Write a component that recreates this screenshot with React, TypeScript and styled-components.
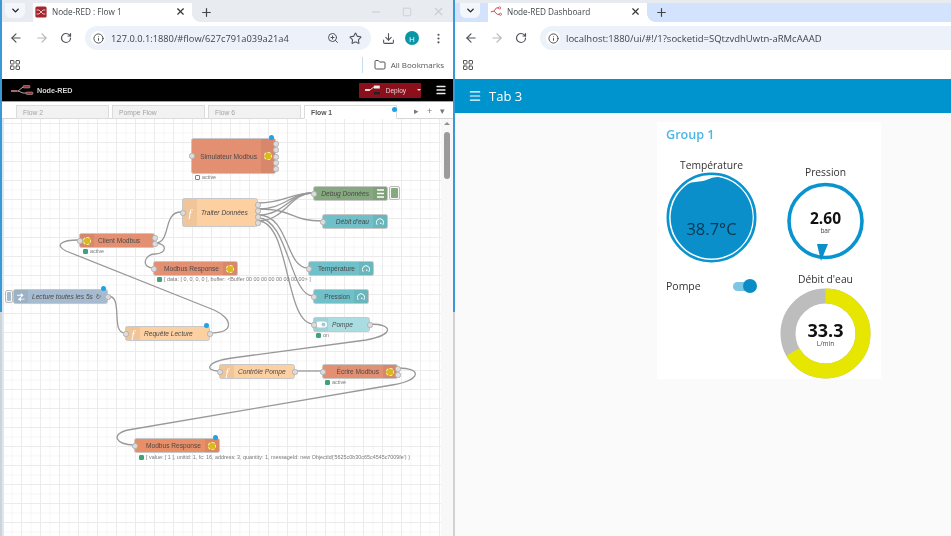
import React from "react";
import styled, { createGlobalStyle } from "styled-components";
import {
  ArrowLeft,
  ArrowRight,
  ChevronDown,
  Download,
  EllipsisVertical,
  Folder,
  Info,
  LayoutGrid,
  Menu,
  Minus,
  Plus,
  RotateCw,
  Square,
  Star,
  X,
  ZoomIn,
} from "lucide-react";

const GlobalStyle = createGlobalStyle`
  html, body { margin: 0; padding: 0; background: #fff; overflow: hidden; }
  * { box-sizing: border-box; }
`;

const Screen = styled.div`
  display: flex;
  width: 951px;
  height: 536px;
  overflow: hidden;
  font-family: "Open Sans", "Noto Sans", sans-serif;
  color: #3c4043;
  background: #fff;
  filter: blur(0.4px);
`;

const Window = styled.section<{ $width: number }>`
  width: ${(p) => p.$width}px;
  flex: none;
  height: 100%;
  display: flex;
  flex-direction: column;
`;

const LeftWindow = styled(Window)`
  border-style: solid;
  border-width: 0 2px 0 2px;
  border-image: linear-gradient(#3b98d6 312px, #d2d2d2 312px) 1;
  border-right: 2px solid #a9a9a9;
`;

const TabStrip = styled.div<{ $bg: string; $pad: number }>`
  height: 22px;
  flex: none;
  border-top: 3px solid #e8ebf0;
  background: ${(p) => p.$bg};
  display: flex;
  align-items: stretch;
  padding-left: ${(p) => p.$pad}px;
`;

const ChevronButton = styled.div`
  width: 20px;
  height: 15px;
  background: #f3f6fb;
  border-radius: 0 0 6px 6px;
  display: flex;
  align-items: center;
  justify-content: center;
  color: #222;
  margin-right: 8px;
`;

const BrowserTab = styled.div`
  position: relative;
  width: 159px;
  background: #fff;
  display: flex;
  align-items: center;
  padding: 0 6px 2px 2px;
  gap: 5px;
  font-size: 8.2px;
  color: #45494d;
  white-space: nowrap;
  &::after {
    content: "";
    position: absolute;
    right: -8px;
    bottom: 0;
    width: 8px;
    height: 8px;
    background: radial-gradient(circle at 100% 0, transparent 7.5px, #fff 8px);
  }
`;

const TabTitle = styled.span`
  flex: 1;
`;

const NewTab = styled.div`
  width: 28px;
  display: flex;
  align-items: center;
  justify-content: center;
  color: #444;
`;

const WindowControls = styled.div`
  margin-left: auto;
  display: flex;
  align-items: center;
  gap: 20px;
  padding: 0 8px 2px 0;
  color: #c9cdd3;
`;

const Toolbar = styled.div<{ $pad: number }>`
  height: 28px;
  flex: none;
  background: #fff;
  display: flex;
  align-items: center;
  padding: 4px 0 0 ${(p) => p.$pad}px;
  color: #555;
`;

const NavIcon = styled.span<{ $gap?: number; $muted?: boolean }>`
  display: flex;
  margin-right: ${(p) => p.$gap ?? 11.5}px;
  color: ${(p) => (p.$muted ? "#b4b7bb" : "#50545a")};
`;

const AddressBar = styled.div<{ $open?: boolean }>`
  flex: 1;
  height: 24px;
  background: #edf2fa;
  border-radius: ${(p) => (p.$open ? "12px 0 0 12px" : "12px")};
  display: flex;
  align-items: center;
  padding: 0 9px 0 6px;
  color: #3f4449;
  white-space: nowrap;
`;

const InfoBadge = styled.span`
  width: 14px;
  height: 14px;
  border-radius: 50%;
  background: #fff;
  display: flex;
  align-items: center;
  justify-content: center;
  margin-right: 6px;
  color: #444;
`;

const Url = styled.span<{ $size: number }>`
  flex: 1;
  font-size: ${(p) => p.$size}px;
`;

const ToolIcons = styled.div`
  display: flex;
  align-items: center;
  gap: 10px;
  color: #50545a;
`;

const Actions = styled.div`
  display: flex;
  align-items: center;
  width: 82px;
  padding-left: 11px;
  color: #50545a;
`;

const Avatar = styled.span`
  width: 14px;
  height: 14px;
  margin: 0 13px 0 10px;
  border-radius: 50%;
  background: #0b96a8;
  color: #fff;
  font-size: 8px;
  display: flex;
  align-items: center;
  justify-content: center;
`;

const BookmarksBar = styled.div`
  height: 29px;
  flex: none;
  background: #fff;
  display: flex;
  align-items: center;
  padding: 0 9px 0 7px;
  color: #555;
  font-size: 8px;
`;

const BookmarkGroup = styled.div`
  margin-left: auto;
  display: flex;
  align-items: center;
  gap: 5px;
  height: 16px;
  border-left: 1px solid #c6dcec;
  padding-left: 11px;
`;

const RedHeader = styled.header`
  height: 23px;
  flex: none;
  background: #000;
  border-bottom: 1px solid #b59a96;
  display: flex;
  align-items: center;
  padding: 0 6px 0 9px;
  color: #ddd;
  font-family: "Liberation Sans", sans-serif;
`;

const Brand = styled.span`
  margin-left: 3px;
  font-size: 7.2px;
  font-weight: 700;
  color: #d7d7d7;
`;

const DeployButton = styled.div`
  margin-left: auto;
  width: 62px;
  height: 15px;
  background: #8c101c;
  display: flex;
  align-items: center;
  padding-left: 6px;
  gap: 5px;
  font-size: 6.5px;
  color: #e6cfd1;
  margin-right: 14px;
`;

const Caret = styled.span`
  margin-left: 6px;
  width: 0;
  height: 0;
  border-left: 2px solid transparent;
  border-right: 2px solid transparent;
  border-top: 2px solid #eee;
`;

const FlowTabs = styled.div`
  height: 17px;
  flex: none;
  background: #fff;
  border-bottom: 1px solid #d6d6d6;
  display: flex;
  align-items: flex-end;
  padding-left: 14px;
  gap: 3px;
  font-family: "Liberation Sans", sans-serif;
  font-size: 6.8px;
`;

const FlowTab = styled.div<{ $active?: boolean }>`
  position: relative;
  width: 93px;
  height: 14px;
  margin-bottom: -1px;
  padding: 3px 0 0 6px;
  background: ${(p) => (p.$active ? "#fff" : "#f2f2f2")};
  border: 1px solid #dcdcdc;
  border-bottom-color: ${(p) => (p.$active ? "#fff" : "#dcdcdc")};
  color: ${(p) => (p.$active ? "#555" : "#a3a3a3")};
  font-weight: ${(p) => (p.$active ? 700 : 400)};
`;

const ChangedDot = styled.span<{ $x: number; $y: number }>`
  position: absolute;
  left: ${(p) => p.$x}px;
  top: ${(p) => p.$y}px;
  width: 5px;
  height: 5px;
  border-radius: 50%;
  background: #1fa2e6;
`;

const TabTools = styled.div`
  margin-left: 14px;
  height: 14px;
  display: flex;
  align-items: center;
  gap: 8px;
  color: #777;
  font-size: 9px;
`;

const Workspace = styled.div`
  flex: 1;
  display: flex;
  min-height: 0;
`;

const Canvas = styled.div`
  position: relative;
  width: 439px;
  flex: none;
  height: 100%;
  overflow: hidden;
  font-family: "Liberation Sans", sans-serif;
  background-color: #fff;
  box-shadow: inset 2px 0 #d9e8f3;
  background-image: linear-gradient(#ebebeb 1px, transparent 1px),
    linear-gradient(90deg, #ebebeb 1px, transparent 1px),
    linear-gradient(#f5f5f5 1px, transparent 1px),
    linear-gradient(90deg, #f5f5f5 1px, transparent 1px);
  background-size: 19px 19px, 19px 19px, 9.5px 9.5px, 9.5px 9.5px;
  background-position: 0 4px, 0 0, 0 4px, 0 0;
`;

const Scrollbar = styled.div`
  flex: 1;
  background: #f8f8f8;
  padding: 3px 3px 0 3px;
`;

const ScrollArrow = styled.div`
  width: 0;
  height: 0;
  margin: 0 0 7px 0;
  border-left: 3px solid transparent;
  border-right: 3px solid transparent;
  border-bottom: 3px solid #8f8f8f;
`;

const ScrollThumb = styled.div`
  height: 47px;
  width: 6px;
  border-radius: 3px;
  background: #9b9b9b;
`;

const Wires = styled.svg`
  position: absolute;
  inset: 0;
`;

const FlowNode = styled.div<{ $x: number; $y: number; $w: number; $h: number; $c: string }>`
  position: absolute;
  left: ${(p) => p.$x}px;
  top: ${(p) => p.$y}px;
  width: ${(p) => p.$w}px;
  height: ${(p) => p.$h}px;
  background: ${(p) => p.$c};
  border: 1px solid #c8c8c8;
  border-radius: 2.5px;
  display: flex;
  align-items: center;
  color: #4a4a4a;
  font-size: 6.6px;
  white-space: nowrap;
`;

const NodeLabel = styled.span<{ $italic?: boolean; $align: string }>`
  flex: 1;
  padding: 0 4px;
  text-align: ${(p) => p.$align};
  font-style: ${(p) => (p.$italic ? "italic" : "normal")};
  min-width: 0;
`;

const NodeIcon = styled.span`
  width: 14px;
  flex: none;
  align-self: stretch;
  background: rgba(0, 0, 0, 0.05);
  display: flex;
  align-items: center;
  justify-content: center;
  color: #fff;
  font-family: "Liberation Serif", serif;
  font-style: italic;
  font-size: 11px;
`;

const ModbusGlyph = styled.span`
  width: 8px;
  height: 8px;
  border-radius: 50%;
  background: #d9b91f;
  border: 1px dashed #fff1b0;
`;

const Port = styled.span<{ $side: "left" | "right"; $top: number }>`
  position: absolute;
  ${(p) => p.$side}: -3.5px;
  top: ${(p) => p.$top}px;
  width: 6px;
  height: 6px;
  border-radius: 2.5px;
  background: #dcdcdc;
  border: 1px solid #b2b2b2;
`;

const NodeStatus = styled.div<{ $x: number; $y: number }>`
  position: absolute;
  left: ${(p) => p.$x}px;
  top: ${(p) => p.$y}px;
  display: flex;
  align-items: center;
  gap: 2px;
  font-size: 5.4px;
  color: #7a7a7a;
  white-space: nowrap;
`;

const StatusMark = styled.span<{ $hollow?: boolean }>`
  width: 5px;
  height: 5px;
  border-radius: 1px;
  background: ${(p) => (p.$hollow ? "#fff" : "#3fa37a")};
  border: 1px solid #3fa37a;
`;

const SideButton = styled.span<{ $x: number; $y: number; $w: number; $h: number; $c: string }>`
  position: absolute;
  left: ${(p) => p.$x}px;
  top: ${(p) => p.$y}px;
  width: ${(p) => p.$w}px;
  height: ${(p) => p.$h}px;
  background: #f7f7f7;
  border: 1px solid #bbb;
  border-radius: 2px;
  padding: 1px;
  &::after {
    content: "";
    display: block;
    height: 100%;
    border-radius: 1px;
    background: ${(p) => p.$c};
  }
`;

const GaugeGlyph = styled.svg`
  display: block;
`;

const RightWindow = styled(Window)`
  flex: 1;
`;

const DashHeader = styled.header`
  height: 34px;
  flex: none;
  background: #0094ce;
  display: flex;
  align-items: center;
  gap: 7px;
  padding-left: 13px;
  color: #fff;
  font-size: 13px;
`;

const DashBody = styled.main`
  flex: 1;
  background: #fafafa;
  padding: 9px 0 0 202px;
`;

const GroupCard = styled.div`
  width: 224px;
  height: 257px;
  background: #fff;
  padding: 5px 9px;
`;

const GroupTitle = styled.h2`
  margin: 0 0 15px;
  font-size: 12.6px;
  line-height: 16px;
  font-weight: 600;
  color: #4db6e8;
`;

const Columns = styled.div`
  display: grid;
  grid-template-columns: 91px 91px;
  column-gap: 23px;
`;

const Column = styled.div`
  display: flex;
  flex-direction: column;
`;

const WidgetTitle = styled.div<{ $mt?: number; $mb?: number }>`
  text-align: center;
  font-size: 10.3px;
  line-height: 14px;
  color: #333;
  margin-top: ${(p) => p.$mt ?? 0}px;
  margin-bottom: ${(p) => p.$mb ?? 0}px;
`;

const Dial = styled.svg`
  display: block;
`;

const DialValue = styled.text<{ $size: number; $weight?: number; $fill?: string }>`
  font-family: "Open Sans", sans-serif;
  font-size: ${(p) => p.$size}px;
  font-weight: ${(p) => p.$weight ?? 400};
  fill: ${(p) => p.$fill ?? "#111"};
  text-anchor: middle;
`;

const SwitchRow = styled.div`
  display: flex;
  align-items: center;
  justify-content: space-between;
  margin-top: 15px;
  height: 16px;
  padding-right: 3px;
  font-size: 10.5px;
  color: #333;
`;

const SwitchTrack = styled.span`
  position: relative;
  width: 21px;
  height: 9px;
  border-radius: 5px;
  background: #7cc5e5;
`;

const SwitchKnob = styled.span`
  position: absolute;
  right: -3px;
  top: -3px;
  width: 14px;
  height: 14px;
  border-radius: 50%;
  background: #0a8cc4;
`;

function Favicon() {
  return (
    <svg width="12" height="12" viewBox="0 0 15 15">
      <rect x="0.5" y="0.5" width="14" height="14" rx="2" fill="#a4262c" />
      <path d="M2 5h3l5 5h3M2 10h3l5-5h3" stroke="#e9c7c7" strokeWidth="1.2" fill="none" />
    </svg>
  );
}

function DashFavicon() {
  return (
    <svg width="12" height="11" viewBox="0 0 15 13">
      <path d="M1 7l4-1 3-4h3M5 6l4 4h3" stroke="#c8474f" strokeWidth="1.2" fill="none" />
      <circle cx="12" cy="2" r="1.4" fill="none" stroke="#c8474f" />
      <circle cx="13" cy="10" r="1.4" fill="none" stroke="#c8474f" />
    </svg>
  );
}

function RedLogo() {
  return (
    <svg width="23" height="12" viewBox="0 0 23 12">
      <path d="M1 7h6l5-4h3M7 7l5 2h3" stroke="#b9a5a3" strokeWidth="1" fill="none" />
      <rect x="0" y="6" width="6" height="2" fill="#a66" />
      <rect x="12" y="1.5" width="7" height="2.5" rx="1" fill="#a33" stroke="#bbb" strokeWidth="0.5" />
      <rect x="15" y="8" width="7" height="2.5" rx="1" fill="#a33" stroke="#bbb" strokeWidth="0.5" />
    </svg>
  );
}

function DeployGlyph() {
  return (
    <svg width="16" height="10" viewBox="0 0 16 10">
      <rect x="0" y="4" width="5" height="2" fill="#e8e0e0" />
      <path d="M5 5l4-3" stroke="#e8e0e0" fill="none" />
      <rect x="9" y="0.5" width="6" height="3" fill="#eee" />
      <rect x="9" y="7" width="6" height="2.5" fill="#222" />
    </svg>
  );
}

function GaugeIcon() {
  return (
    <GaugeGlyph width="8" height="8" viewBox="0 0 10 10">
      <path d="M1.5 8.5a4.6 4.6 0 1 1 7 0" stroke="#fff" strokeWidth="1.2" fill="none" />
      <circle cx="6" cy="6.5" r="1" fill="#fff" />
    </GaugeGlyph>
  );
}

function DebugIcon() {
  return (
    <GaugeGlyph width="7" height="9" viewBox="0 0 7 9">
      <path d="M0 1h7M0 4.5h7M0 8h7" stroke="#fff" strokeWidth="1.6" />
    </GaugeGlyph>
  );
}

function InjectIcon() {
  return (
    <GaugeGlyph width="8" height="10" viewBox="0 0 8 10">
      <path d="M0 3h4V1l3 2.5L4 6V4H0zM8 7H4V5L1 7.5 4 10V8h4z" fill="#fff" transform="scale(0.95)" />
    </GaugeGlyph>
  );
}

function SwitchIcon() {
  return (
    <GaugeGlyph width="11" height="7" viewBox="0 0 11 7">
      <rect x="0" y="0.5" width="11" height="6" rx="3" fill="#fff" />
      <circle cx="7.5" cy="3.5" r="2" fill="#9ccdd3" />
    </GaugeGlyph>
  );
}

type Side = "left" | "right";

interface NodeSpec {
  id: string;
  label: string;
  x: number;
  y: number;
  w: number;
  h: number;
  color: string;
  italic?: boolean;
  side: Side;
  icon?: React.ReactNode;
  input?: boolean;
  outputs?: number[];
}

// canvas origin is page (2, 119)
const ORIGIN_X = 2;
const ORIGIN_Y = 119;

const RED = "#e38f72";
const ORANGE = "#fdd0a2";
const TEAL = "#6fc0c8";

const nodes: NodeSpec[] = [
  { id: "sim", label: "Simulateur Modbus", x: 191, y: 138, w: 85, h: 36, color: RED, side: "right", icon: <ModbusGlyph />, input: true, outputs: [2, 8, 15, 21, 27] },
  { id: "traiter", label: "Traiter Données", x: 182, y: 198, w: 76, h: 29, color: ORANGE, italic: true, side: "left", icon: "f", input: true, outputs: [3, 9, 15, 21] },
  { id: "debug", label: "Debug Données", x: 313, y: 186, w: 75, h: 15, color: "#87a980", italic: true, side: "right", icon: <DebugIcon />, input: true },
  { id: "debit", label: "Débit d'eau", x: 322, y: 214, w: 66, h: 15, color: TEAL, italic: true, side: "right", icon: <GaugeIcon />, input: true },
  { id: "temp", label: "Température", x: 308, y: 261, w: 66, h: 15, color: TEAL, side: "right", icon: <GaugeIcon />, input: true },
  { id: "press", label: "Pression", x: 313, y: 289, w: 56, h: 15, color: TEAL, side: "right", icon: <GaugeIcon />, input: true },
  { id: "pompe", label: "Pompe", x: 313, y: 317, w: 57, h: 15, color: "#a9dde2", italic: true, side: "left", icon: <SwitchIcon />, input: true, outputs: [4] },
  { id: "client", label: "Client Modbus", x: 79, y: 233, w: 76, h: 15, color: RED, side: "left", icon: <ModbusGlyph />, input: true, outputs: [1, 7] },
  { id: "resp1", label: "Modbus Response", x: 153, y: 261, w: 85, h: 15, color: RED, side: "right", icon: <ModbusGlyph />, input: true },
  { id: "lecture", label: "Lecture toutes les 5s ↻", x: 13, y: 289, w: 95, h: 15, color: "#a6bbcf", italic: true, side: "left", icon: <InjectIcon />, outputs: [4] },
  { id: "requete", label: "Requête Lecture", x: 125, y: 326, w: 85, h: 15, color: ORANGE, italic: true, side: "left", icon: "f", input: true, outputs: [4] },
  { id: "controle", label: "Contrôle Pompe", x: 219, y: 364, w: 76, h: 15, color: ORANGE, italic: true, side: "left", icon: "f", input: true, outputs: [4] },
  { id: "ecrire", label: "Écrire Modbus", x: 322, y: 364, w: 76, h: 15, color: RED, side: "right", icon: <ModbusGlyph />, input: true, outputs: [1, 7] },
  { id: "resp2", label: "Modbus Response", x: 134, y: 438, w: 86, h: 15, color: "#e88f68", side: "right", icon: <ModbusGlyph />, input: true },
];

const statuses = [
  { x: 195, y: 174, text: "active", hollow: true },
  { x: 83, y: 248, text: "active" },
  { x: 157, y: 276, text: "[ data: [ 0, 0, 0, 0 ], buffer: <Buffer 00 00 00 00 00 00 00 00> ]" },
  { x: 316, y: 332, text: "on" },
  { x: 325, y: 379, text: "active" },
  { x: 139, y: 454, text: "[ value: [ 1 ], unitid: 1, fc: 16, address: 3, quantity: 1, messageId: new ObjectId('5625c0b30c65c4545c7009fe') }" },
];

const changed = [
  [271, 137],
  [103, 288],
  [206, 325],
  [215, 437],
];

const wirePaths = [
  "M155 243C172 243 162 212 181 212",
  "M155 243C168 243 167 254 155 254C144 254 141 268 153 268",
  "M210 333C236 333 232 318 214 310L66 251C54 245 62 240 78 240",
  "M108 296C124 296 110 333 125 333",
  "M258 203C285 203 290 193 313 193",
  "M258 209C285 209 290 193 313 193",
  "M258 215C285 215 290 193 313 193",
  "M258 221C285 221 290 193 313 193",
  "M258 209C295 209 290 221 322 221",
  "M258 215C290 215 285 268 308 268",
  "M258 218C288 218 290 296 313 296",
  "M258 221C290 221 285 324 313 324",
  "M370 324C394 324 394 335 366 340L232 358C205 362 205 371 219 371",
  "M295 371L322 371",
  "M398 368C422 368 422 380 392 385L128 430C110 434 116 445 134 445",
];

function FlowCanvas() {
  return (
    <Canvas>
      <Wires width="439" height="417" viewBox={`${ORIGIN_X} ${ORIGIN_Y} 439 417`}>
        {wirePaths.map((d) => (
          <path key={d} d={d} fill="none" stroke="#999" strokeWidth="1.3" />
        ))}
      </Wires>
      <SideButton $x={5 - ORIGIN_X} $y={290 - ORIGIN_Y} $w={8} $h={13} $c="#a6bbcf" />
      <SideButton $x={389 - ORIGIN_X} $y={186 - ORIGIN_Y} $w={11} $h={14} $c="#87a980" />
      {nodes.map((n) => (
        <FlowNode key={n.id} $x={n.x - ORIGIN_X} $y={n.y - ORIGIN_Y} $w={n.w} $h={n.h} $c={n.color}>
          {n.side === "left" && <NodeIcon>{n.icon}</NodeIcon>}
          <NodeLabel $italic={n.italic} $align={n.side === "left" ? "left" : "right"}>
            {n.label}
          </NodeLabel>
          {n.side === "right" && <NodeIcon>{n.icon}</NodeIcon>}
          {n.input && <Port $side="left" $top={(n.h - 2) / 2 - 3} />}
          {(n.outputs ?? []).map((top) => (
            <Port key={top} $side="right" $top={top} />
          ))}
        </FlowNode>
      ))}
      {statuses.map((s) => (
        <NodeStatus key={s.x} $x={s.x - ORIGIN_X} $y={s.y - ORIGIN_Y}>
          <StatusMark $hollow={s.hollow} />
          {s.text}
        </NodeStatus>
      ))}
      {changed.map(([x, y]) => (
        <ChangedDot key={x} $x={x - 2.5 - ORIGIN_X} $y={y - 2.5 - ORIGIN_Y} />
      ))}
    </Canvas>
  );
}

function TemperatureDial() {
  return (
    <Dial width="91" height="91" viewBox="0 0 91 91">
      <circle cx="45.5" cy="45.5" r="43.7" fill="#fff" stroke="#0a94cf" strokeWidth="2.6" />
      <path d="M22 12C26 9.5 32 10 37 9C42 8 45 5 52 5A41 41 0 1 1 22 12Z" fill="#0a8fcb" />
      <DialValue x="45.5" y="63" $size={16.5} $fill="#0c3550">
        38.7°C
      </DialValue>
    </Dial>
  );
}

function PressureDial() {
  return (
    <Dial width="91" height="84" viewBox="0 0 91 84">
      <circle cx="45.5" cy="41" r="36.5" fill="#fff" stroke="#0a94cf" strokeWidth="3.6" />
      <path d="M37 64L48 64L41 81Z" fill="#0a8fcb" />
      <DialValue x="45.5" y="44" $size={15.5} $weight={700}>
        2.60
      </DialValue>
      <DialValue x="45.5" y="53" $size={6.5} $fill="#444">
        bar
      </DialValue>
    </Dial>
  );
}

// 33.3 on the flow gauge fills two thirds of the ring, clockwise from the top
function FlowDial() {
  const r = 37.5;
  const circumference = 2 * Math.PI * r;
  return (
    <Dial width="91" height="91" viewBox="0 0 91 91">
      <circle cx="45.5" cy="45.5" r={r} fill="none" stroke="#bdbdbd" strokeWidth="15" />
      <circle
        cx="45.5"
        cy="45.5"
        r={r}
        fill="none"
        stroke="#e6e600"
        strokeWidth="15"
        strokeDasharray={`${circumference * 0.667} ${circumference}`}
        transform="rotate(-90 45.5 45.5)"
      />
      <DialValue x="45.5" y="49" $size={18} $weight={700}>
        33.3
      </DialValue>
      <DialValue x="45.5" y="57.5" $size={6.5} $fill="#444">
        L/min
      </DialValue>
    </Dial>
  );
}

export default function App() {
  return (
    <>
      <GlobalStyle />
      <Screen>
        <LeftWindow $width={455}>
          <TabStrip $bg="#e8ebf0" $pad={3}>
            <ChevronButton>
              <ChevronDown size={11} strokeWidth={3} />
            </ChevronButton>
            <BrowserTab>
              <Favicon />
              <TabTitle>Node-RED : Flow 1</TabTitle>
              <X size={11} strokeWidth={2.5} color="#333" />
            </BrowserTab>
            <NewTab>
              <Plus size={13} strokeWidth={2.2} />
            </NewTab>
            <WindowControls>
              <Minus size={12} />
              <Square size={10} />
              <X size={13} />
            </WindowControls>
          </TabStrip>
          <Toolbar $pad={7}>
            <NavIcon>
              <ArrowLeft size={14} />
            </NavIcon>
            <NavIcon $muted>
              <ArrowRight size={14} />
            </NavIcon>
            <NavIcon $gap={13}>
              <RotateCw size={12} strokeWidth={2.4} />
            </NavIcon>
            <AddressBar>
              <InfoBadge>
                <Info size={11} />
              </InfoBadge>
              <Url $size={9.3}>127.0.0.1:1880/#flow/627c791a039a21a4</Url>
              <ToolIcons>
                <ZoomIn size={12} />
                <Star size={13} />
              </ToolIcons>
            </AddressBar>
            <Actions>
              <Download size={13} />
              <Avatar>H</Avatar>
              <EllipsisVertical size={13} />
            </Actions>
          </Toolbar>
          <BookmarksBar>
            <LayoutGrid size={12} />
            <BookmarkGroup>
              <Folder size={12} />
              All Bookmarks
            </BookmarkGroup>
          </BookmarksBar>
          <RedHeader>
            <RedLogo />
            <Brand>Node-RED</Brand>
            <DeployButton>
              <DeployGlyph />
              Deploy
              <Caret />
            </DeployButton>
            <Menu size={12} strokeWidth={2.6} color="#eee" />
          </RedHeader>
          <FlowTabs>
            <FlowTab>Flow 2</FlowTab>
            <FlowTab>Pompe Flow</FlowTab>
            <FlowTab>Flow 6</FlowTab>
            <FlowTab $active>
              Flow 1
              <ChangedDot $x={87} $y={1} />
            </FlowTab>
            <TabTools>
              <span>▸</span>
              <span>+</span>
              <span>▾</span>
            </TabTools>
          </FlowTabs>
          <Workspace>
            <FlowCanvas />
            <Scrollbar>
              <ScrollArrow />
              <ScrollThumb />
            </Scrollbar>
          </Workspace>
        </LeftWindow>

        <RightWindow $width={496}>
          <TabStrip $bg="#d3e3fd" $pad={5}>
            <ChevronButton>
              <ChevronDown size={11} strokeWidth={3} />
            </ChevronButton>
            <BrowserTab>
              <DashFavicon />
              <TabTitle>Node-RED Dashboard</TabTitle>
              <X size={11} strokeWidth={2.5} color="#333" />
            </BrowserTab>
            <NewTab>
              <Plus size={13} strokeWidth={2.2} />
            </NewTab>
          </TabStrip>
          <Toolbar $pad={9}>
            <NavIcon>
              <ArrowLeft size={14} />
            </NavIcon>
            <NavIcon $muted>
              <ArrowRight size={14} />
            </NavIcon>
            <NavIcon $gap={13}>
              <RotateCw size={12} strokeWidth={2.4} />
            </NavIcon>
            <AddressBar $open>
              <InfoBadge>
                <Info size={11} />
              </InfoBadge>
              <Url $size={9.5}>localhost:1880/ui/#!/1?socketid=SQtzvdhUwtn-aRMcAAAD</Url>
            </AddressBar>
          </Toolbar>
          <BookmarksBar>
            <LayoutGrid size={12} />
          </BookmarksBar>
          <DashHeader>
            <Menu size={14} />
            Tab 3
          </DashHeader>
          <DashBody>
            <GroupCard>
              <GroupTitle>Group 1</GroupTitle>
              <Columns>
                <Column>
                  <WidgetTitle>Température</WidgetTitle>
                  <TemperatureDial />
                  <SwitchRow>
                    Pompe
                    <SwitchTrack>
                      <SwitchKnob />
                    </SwitchTrack>
                  </SwitchRow>
                </Column>
                <Column>
                  <WidgetTitle $mt={7} $mb={1}>
                    Pression
                  </WidgetTitle>
                  <PressureDial />
                  <WidgetTitle $mt={8} $mb={2}>
                    Débit d'eau
                  </WidgetTitle>
                  <FlowDial />
                </Column>
              </Columns>
            </GroupCard>
          </DashBody>
        </RightWindow>
      </Screen>
    </>
  );
}
